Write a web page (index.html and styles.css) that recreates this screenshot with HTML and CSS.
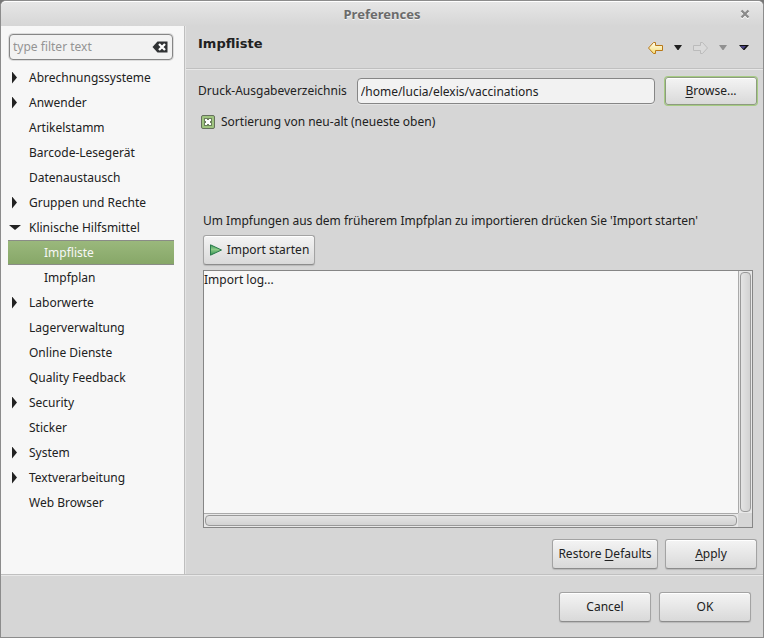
FILE: index.html
```
<!DOCTYPE html>
<html lang="de">
<head>
<meta charset="utf-8">
<meta name="viewport" content="width=device-width, initial-scale=1">
<title>Preferences</title>
<link rel="stylesheet" href="styles.css">
</head>
<body>
<div class="window">
  <header class="titlebar">
    <h1 class="titlebar-text">Preferences</h1>
    <button class="icon-button close" type="button" aria-label="Close">
      <svg width="10" height="10" viewBox="0 0 10 10"><path d="M1.5 2.500l7 7M8.500 2.500l-7 7" stroke="#fff" stroke-width="2.400"/><path d="M1.500 1.500l7 7M8.500 1.500l-7 7" stroke="#8b8b8b" stroke-width="2.400"/></svg>
    </button>
  </header>

  <div class="content">
    <nav class="sidebar">
      <div class="filter">
        <input class="filter-input" type="text" placeholder="type filter text" aria-label="Filter">
        <button class="icon-button" type="button" aria-label="Clear">
          <svg width="16" height="12" viewBox="0 0 16 12"><path d="M5.500 .5H15.500V11.500H5.500L.5 6z" fill="#303234"/><path d="M7 3l6 6M13 3l-6 6" stroke="#fff" stroke-width="2.300"/></svg>
        </button>
      </div>
      <ul class="tree">
        <li class="tree-row"><button class="expander" type="button" aria-label="Expand"></button>Abrechnungssysteme</li>
        <li class="tree-row"><button class="expander" type="button" aria-label="Expand"></button>Anwender</li>
        <li class="tree-row leaf">Artikelstamm</li>
        <li class="tree-row leaf">Barcode-Lesegerät</li>
        <li class="tree-row leaf">Datenaustausch</li>
        <li class="tree-row"><button class="expander" type="button" aria-label="Expand"></button>Gruppen und Rechte</li>
        <li class="tree-row"><button class="expander open" type="button" aria-label="Collapse"></button>Klinische Hilfsmittel</li>
        <li class="tree-row child selected">Impfliste</li>
        <li class="tree-row child">Impfplan</li>
        <li class="tree-row"><button class="expander" type="button" aria-label="Expand"></button>Laborwerte</li>
        <li class="tree-row leaf">Lagerverwaltung</li>
        <li class="tree-row leaf">Online Dienste</li>
        <li class="tree-row leaf">Quality Feedback</li>
        <li class="tree-row"><button class="expander" type="button" aria-label="Expand"></button>Security</li>
        <li class="tree-row leaf">Sticker</li>
        <li class="tree-row"><button class="expander" type="button" aria-label="Expand"></button>System</li>
        <li class="tree-row"><button class="expander" type="button" aria-label="Expand"></button>Textverarbeitung</li>
        <li class="tree-row leaf">Web Browser</li>
      </ul>
    </nav>

    <main class="page">
      <div class="page-header">
        <h2 class="page-title">Impfliste</h2>
        <div class="history">
          <button class="icon-button" type="button" aria-label="Back">
            <svg width="16" height="14" viewBox="0 0 16 14"><defs><linearGradient id="gold" x2="0" y2="1"><stop offset="0" stop-color="#fffef0"/><stop offset="1" stop-color="#f5dc72"/></linearGradient></defs><path d="M1.500 7L6.500 1.500H8.500V4.500H15.500V9.500H8.500V12.500H6.500z" fill="url(#gold)" stroke="#b87818"/></svg>
          </button>
          <button class="icon-button" type="button" aria-label="Back history">
            <svg width="10" height="6" viewBox="0 0 10 6"><path d="M1 0H9L5.500 5H4.500z" fill="#202020"/></svg>
          </button>
          <button class="icon-button" type="button" aria-label="Forward" disabled>
            <svg width="16" height="14" viewBox="0 0 16 14"><path d="M14.500 7L9.500 1.500H7.500V4.500H.5V9.500H7.500V12.500H9.500z" fill="#dadada" stroke="#bbb"/></svg>
          </button>
          <button class="icon-button" type="button" aria-label="Forward history" disabled>
            <svg width="10" height="6" viewBox="0 0 10 6"><path d="M0 0H8L4.500 5H3.500z" fill="#919191"/></svg>
          </button>
          <button class="icon-button" type="button" aria-label="Menu">
            <svg width="10" height="6" viewBox="0 0 10 6"><path d="M0 0H10L5.500 5H4.500z" fill="#111"/><path d="M1 1H7L4.500 4z" fill="#4a4385"/></svg>
          </button>
        </div>
      </div>

      <div class="form">
        <div class="field">
          <label for="output-dir">Druck-Ausgabeverzeichnis</label>
          <input class="text-input" id="output-dir" type="text" value="/home/lucia/elexis/vaccinations">
          <button class="button focused" type="button"><u>B</u>rowse...</button>
        </div>
        <div class="check">
          <input class="checkbox" id="sorting" type="checkbox" checked>
          <label for="sorting">Sortierung von neu-alt (neueste oben)</label>
        </div>
        <section class="import">
          <label class="import-hint" for="log">Um Impfungen aus dem früherem Impfplan zu importieren drücken Sie 'Import starten'</label>
          <button class="button import-button" type="button">
            <svg width="14" height="12" viewBox="0 0 14 12"><defs><linearGradient id="green" x2="0" y2="1"><stop offset="0" stop-color="#3f9a5b"/><stop offset=".45" stop-color="#8cca86"/><stop offset="1" stop-color="#2f9150"/></linearGradient></defs><path d="M1.500 .8L12.500 6L1.500 11.200z" fill="url(#green)" stroke="#2a7a4b"/></svg>
            Import starten
          </button>
          <div class="log">
            <textarea class="log-text" id="log" readonly>Import log...</textarea>
            <div class="scroll vertical"><div class="thumb"></div></div>
            <div class="scroll horizontal"><div class="thumb"></div></div>
          </div>
        </section>
        <div class="actions">
          <button class="button restore" type="button">Restore <u>D</u>efaults</button>
          <button class="button" type="button"><u>A</u>pply</button>
        </div>
      </div>
    </main>
  </div>

  <footer class="footer">
    <button class="button" type="button">Cancel</button>
    <button class="button" type="button">OK</button>
  </footer>
</div>
</body>
</html>
```
FILE: styles.css
```
* {
  box-sizing: border-box;
}

body {
  margin: 0;
  background: #777;
  color: #212121;
  font: 12px/16px "Noto Sans", sans-serif;
}

button,
input,
textarea {
  color: inherit;
  font: inherit;
}

.window {
  display: flex;
  flex-direction: column;
  min-height: 100vh;
  border: 1px solid #8c8c8c;
  border-radius: 6px 6px 0 0;
  background: #d6d6d6;
}

.titlebar {
  display: grid;
  grid-template-columns: 24px 1fr 24px;
  align-items: center;
  height: 25px;
  padding: 0 6px;
  border-top: 1px solid #fff;
  border-radius: 5px 5px 0 0;
  background: linear-gradient(#e6e6e6, #d6d6d6);
}

.titlebar-text {
  grid-column: 2;
  margin: 0;
  color: #6b6b6b;
  font-size: 13px;
  line-height: 16px;
  text-align: center;
  text-shadow: 0 1px #f4f4f4;
}

.icon-button {
  display: flex;
  align-items: center;
  justify-content: center;
  padding: 0;
  border: 0;
  background: none;
}

.content {
  display: flex;
  flex: 1;
}

.sidebar {
  flex: 0 0 185px;
  min-width: 0;
  padding: 7px 11px 0 7px;
  border-right: 1px solid #e4e4e4;
  background: #f7f7f7;
  box-shadow: inset -1px 0 #bebebe;
}

.filter {
  display: flex;
  align-items: center;
  height: 26px;
  padding-right: 4px;
  border: 1px solid #868686;
  border-radius: 4px;
  background: #f2f2f2;
  box-shadow: 0 0 0 1px #dcdcdc;
  margin: 1px;
}

.filter-input {
  flex: 1;
  min-width: 0;
  padding: 0 3px;
  border: 0;
  background: none;
  outline: 0;
}

.filter-input::placeholder {
  color: #949494;
  opacity: 1;
}

.tree {
  margin: 5px 0 0;
  padding: 0;
  list-style: none;
}

.tree-row {
  display: flex;
  align-items: center;
  height: 25px;
}

.leaf {
  padding-left: 21px;
}

.child {
  padding-left: 36px;
}

.selected {
  border-top: 1px solid #8a8c87;
  border-bottom: 1px solid #8a8c87;
  background: linear-gradient(#9ab87c, #87a768);
  color: #f7f7f7;
}

.expander {
  display: flex;
  width: 21px;
  height: 12px;
  padding: 0 0 0 4px;
  border: 0;
  background: none;
}

.expander::before {
  width: 5px;
  height: 12px;
  background: #222;
  clip-path: polygon(0 0, 100% 50%, 0 100%);
  content: "";
}

.expander.open {
  align-items: center;
  padding-left: 1px;
}

.expander.open::before {
  width: 12px;
  height: 5px;
  clip-path: polygon(0 0, 100% 0, 50% 100%);
}

.page {
  display: flex;
  flex: 1;
  flex-direction: column;
  min-width: 0;
}

.page-header {
  display: flex;
  justify-content: space-between;
  height: 44px;
  padding: 8px 14px 0 12px;
  border-bottom: 1px solid #e8e8e8;
  box-shadow: inset 0 -1px #c0c0c0;
}

.page-title {
  margin: 0;
  font-family: "DejaVu Sans", sans-serif;
  font-size: 13px;
  line-height: 20px;
}

.history {
  display: flex;
  align-items: center;
  align-self: flex-start;
  gap: 10px;
  height: 28px;
}

.form {
  display: flex;
  flex: 1;
  flex-direction: column;
  padding: 6px 6px 5px 12px;
}

.field {
  display: flex;
  align-items: center;
  gap: 10px;
}

.text-input {
  flex: 1;
  min-width: 0;
  height: 26px;
  padding: 0 3px;
  border: 1px solid #868686;
  border-radius: 4px;
  background: #f2f2f2;
  box-shadow: 0 1px #e4e4e4;
}

.button {
  width: 92px;
  height: 30px;
  padding: 0 4px;
  border: 1px solid #a3a3a3;
  border-bottom-color: #8c8c8c;
  border-radius: 3px;
  background: linear-gradient(#f4f4f4, #d9d9d9);
  box-shadow: inset 0 1px #fff, 0 1px 1px #b9b9b9;
  white-space: nowrap;
}

.button u {
  text-underline-offset: 2px;
}

.focused {
  height: 28px;
  margin: 1px 0;
  border-color: #8d9b7f;
  box-shadow: inset 0 1px #fff, 0 0 0 1px #a6cc83;
}

.check {
  display: flex;
  align-items: center;
  gap: 6px;
  margin-top: 8px;
  padding-left: 3px;
}

.checkbox {
  width: 14px;
  height: 14px;
  margin: 0;
  border: 1px solid #65705c;
  border-radius: 2px;
  appearance: none;
  background:
    linear-gradient(45deg, transparent 38%, #fff 38% 62%, transparent 62%) center / 6px 6px no-repeat,
    linear-gradient(-45deg, transparent 38%, #fff 38% 62%, transparent 62%) center / 6px 6px no-repeat,
    linear-gradient(#6c805e, #6c805e) center / 8px 8px no-repeat,
    #a0c580;
}

.import {
  display: flex;
  flex: 1;
  flex-direction: column;
  align-items: flex-start;
  margin-top: 83px;
  padding: 0 4px 0 5px;
}

.import-button {
  display: flex;
  align-items: center;
  justify-content: center;
  gap: 4px;
  width: 112px;
  margin: 6px 0 5px;
}

.log {
  display: grid;
  flex: 1;
  grid-template-columns: 1fr 14px;
  grid-template-rows: 1fr 14px;
  align-self: stretch;
  border: 1px solid #868686;
}

.log-text {
  width: 100%;
  height: 100%;
  min-height: 80px;
  padding: 1px 0;
  border: 0;
  background: #f7f7f7;
  outline: 0;
  resize: none;
}

.scroll {
  display: flex;
  padding: 1px;
  background: #e8e8e8;
}

.vertical {
  border-left: 1px solid #aaa;
}

.horizontal {
  border-top: 1px solid #aaa;
}

.thumb {
  flex: 1;
  border: 1px solid #999;
  border-radius: 4px;
  background: linear-gradient(#e4e4e4, #d2d2d2);
}

.vertical .thumb {
  background: linear-gradient(90deg, #e4e4e4, #d2d2d2);
}

.actions {
  display: flex;
  justify-content: flex-end;
  gap: 7px;
  margin-top: 11px;
}

.restore {
  width: 106px;
}

.footer {
  display: flex;
  justify-content: flex-end;
  gap: 8px;
  padding: 17px 12px 15px;
  border-top: 1px solid #c0c0c0;
  box-shadow: inset 0 1px #e8e8e8;
}
```
